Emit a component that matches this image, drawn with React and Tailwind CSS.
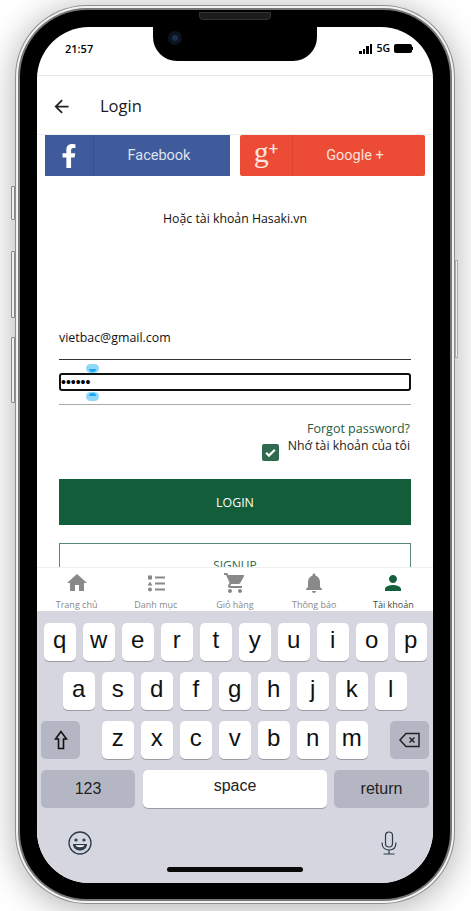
import { FaFacebookF } from 'react-icons/fa'

const font = { fontFamily: '"Open Sans", sans-serif' }

const row1 = ['q', 'w', 'e', 'r', 't', 'y', 'u', 'i', 'o', 'p']
const row2 = ['a', 's', 'd', 'f', 'g', 'h', 'j', 'k', 'l']
const row3 = ['z', 'x', 'c', 'v', 'b', 'n', 'm']

const tabs = [
  { label: 'Trang chủ', path: 'M10 20v-6h4v6h5v-8h3L12 3 2 12h3v8z' },
  { label: 'Danh mục', path: 'M4 4.5h4v4H4zM11 5.5h10v2H11zM6 10.5l2.4 4H3.6zM11 11.5h10v2H11zM6 16.5a2 2 0 1 1 0 4 2 2 0 0 1 0-4zM11 17.5h10v2H11z' },
  { label: 'Giỏ hàng', path: 'M7 18c-1.1 0-1.99.9-1.99 2S5.9 22 7 22s2-.9 2-2-.9-2-2-2zM1 2v2h2l3.6 7.59-1.35 2.45c-.16.28-.25.61-.25.96 0 1.1.9 2 2 2h12v-2H7.42c-.14 0-.25-.11-.25-.25l.03-.12.9-1.63h7.45c.75 0 1.41-.41 1.75-1.03l3.58-6.49A1 1 0 0 0 20 4H5.21l-.94-2H1zm16 16c-1.1 0-1.99.9-1.99 2s.89 2 1.99 2 2-.9 2-2-.9-2-2-2z' },
  { label: 'Thông báo', path: 'M12 22c1.1 0 2-.9 2-2h-4c0 1.1.9 2 2 2zm6-6v-5c0-3.07-1.63-5.64-4.5-6.32V4c0-.83-.67-1.5-1.5-1.5s-1.5.67-1.5 1.5v.68C7.64 5.36 6 7.92 6 11v5l-2 2v1h16v-1l-2-2z' },
  { label: 'Tài khoản', path: 'M12 12c2.21 0 4-1.79 4-4s-1.79-4-4-4-4 1.79-4 4 1.79 4 4 4zm0 2c-2.67 0-8 1.34-8 4v2h16v-2c0-2.66-5.33-4-8-4z', active: true },
]

function Key({ k }) {
  return (
    <div className="w-[31.5px] h-[38px] bg-white rounded-[5px] shadow-[0_1px_0_#9a9ba3] flex items-center justify-center text-[24px] leading-none text-[#111] pb-1">
      {k}
    </div>
  )
}

function Tab({ tab }) {
  return (
    <div className="flex-1 flex flex-col items-center">
      <svg viewBox="0 0 24 24" className="w-[24px] h-[24px]" fill={tab.active ? '#14603c' : '#8a8888'}>
        <path d={tab.path} />
      </svg>
      <span className={`text-[9px] leading-[13px] mt-[3px] ${tab.active ? 'text-[#3c4a44]' : 'text-[#888]'}`}>{tab.label}</span>
    </div>
  )
}

export default function App() {
  return (
    <div className="w-[471px] h-[911px] bg-white overflow-hidden pt-[5px] pl-[15px]" style={font}>
      <div className="relative w-[440px] h-[899px] rounded-[72px] bg-[#8f8f8f] p-[1px] shadow-[0_4px_34px_rgba(0,0,0,0.32)]">
        {/* side buttons */}
        <div className="absolute left-[-4px] top-[181px] w-[4px] h-[34px] border border-[#888] rounded-l-[1px] bg-[#eee]" />
        <div className="absolute left-[-4px] top-[246px] w-[4px] h-[67px] border border-[#888] rounded-l-[1px] bg-[#eee]" />
        <div className="absolute left-[-4px] top-[332px] w-[4px] h-[66px] border border-[#888] rounded-l-[1px] bg-[#eee]" />
        <div className="absolute right-[-3px] top-[255px] w-[3px] h-[98px] border border-[#aaa] bg-[#eee]" />

        <div className="w-full h-full rounded-[71px] bg-[#f2f2f2] p-[2px]">
          <div className="w-full h-full rounded-[69px] bg-[#777] p-[2px]">
            <div className="relative w-full h-full rounded-[67px] bg-black pt-[17px] pl-[17px]">
              {/* speaker */}
              <div className="absolute left-[179px] top-[2px] w-[72px] h-[8px] rounded-b-[4px] bg-[#1c1c1c] border border-[#333]" />

              <div className="relative w-[396px] h-[856px] rounded-[52px] overflow-hidden bg-white flex flex-col">
                {/* notch */}
                <div className="absolute left-[116px] top-0 w-[164px] h-[34px] bg-black rounded-b-[24px] z-20">
                  <div className="absolute left-[15px] top-[4px] w-[14px] h-[14px] rounded-full bg-[#0c1220]">
                    <div className="absolute left-[4px] top-[4px] w-[6px] h-[6px] rounded-full bg-[#1f2f4e]" />
                  </div>
                </div>

                {/* status bar */}
                <div className="h-[49px] shrink-0 border-b border-[#e8e8e8] flex justify-between pl-[28px] pr-[20px] pt-[14px]">
                  <span className="text-[11px] leading-[15px] font-semibold text-black">21:57</span>
                  <div className="flex items-center h-[15px] gap-[4px]">
                    <div className="flex items-end gap-[1px] h-[10px]">
                      <div className="w-[2.5px] h-[3px] bg-black" />
                      <div className="w-[2.5px] h-[5px] bg-black" />
                      <div className="w-[2.5px] h-[8px] bg-black" />
                      <div className="w-[2.5px] h-[10px] bg-black" />
                    </div>
                    <span className="text-[10.5px] font-semibold leading-none text-black">5G</span>
                    <div className="flex items-center">
                      <div className="w-[18px] h-[9px] rounded-[2px] bg-black" />
                      <div className="w-[1px] h-[3px] bg-black" />
                    </div>
                  </div>
                </div>

                {/* header */}
                <div className="h-[59px] shrink-0 border-b border-[#eee] flex items-center pl-[14px] pt-[2px]">
                  <svg viewBox="0 0 24 24" className="w-[21px] h-[21px]" fill="#222">
                    <path d="M20 11H7.83l5.59-5.59L12 4l-8 8 8 8 1.41-1.41L7.83 13H20v-2z" />
                  </svg>
                  <span className="ml-[28px] text-[16.5px] font-medium text-[#1a1a1a]">Login</span>
                </div>

                <div className="flex-1 overflow-hidden relative">
                  {/* social */}
                  <div className="flex gap-[10px] pl-[8px]">
                    <div className="w-[185px] h-[41px] bg-[#3f5b9b] flex text-[#dde3f0]">
                      <div className="w-[49px] border-r border-[#37508c] flex items-center justify-center">
                        <FaFacebookF className="text-[24px] text-white" />
                      </div>
                      <span className="flex-1 text-center leading-[41px] text-[14.5px] pr-[6px]" style={{ fontFamily: 'Roboto, sans-serif' }}>Facebook</span>
                    </div>
                    <div className="w-[185px] h-[41px] rounded-[2px] bg-[#ec4c35] flex text-[#fbe0db]">
                      <div className="w-[53px] border-r border-[#d94530] flex items-start justify-center leading-none">
                        <span className="text-[30px] leading-[34px] text-[#fde6e2]" style={{ fontFamily: '"Liberation Serif", serif' }}>g</span>
                        <span className="text-[17px] leading-[26px] text-[#fde6e2]" style={{ fontFamily: 'Roboto, sans-serif' }}>+</span>
                      </div>
                      <span className="flex-1 text-center leading-[41px] text-[14.5px] pr-[8px]" style={{ fontFamily: 'Roboto, sans-serif' }}>Google +</span>
                    </div>
                  </div>

                  <p className="text-center text-[12.3px] leading-[17px] text-[#111] mt-[34px]">Hoặc tài khoản Hasaki.vn</p>

                  {/* form */}
                  <div className="px-[22px] mt-[102px] relative">
                    <div className="h-[31px] border-b border-[#333] text-[12.4px] leading-[17px] text-[#111]">vietbac@gmail.com</div>
                    <div className="h-[45px] border-b border-[#aaa] pt-[13px] relative">
                      <div className="h-[18px] rounded-[3px] border-2 border-[#111] flex items-center text-[14px] text-black leading-none" style={{ fontFamily: '"Liberation Sans", sans-serif' }}>••••••</div>
                      <div className="absolute left-[27px] top-[4px] w-[13px] h-[9px] rounded-full bg-[#8fd8fb]">
                        <div className="absolute left-[3px] top-[5px] w-[7px] h-[3px] rounded-b-full bg-[#1ba9f0]" />
                      </div>
                      <div className="absolute left-[27px] top-[32px] w-[13px] h-[9px] rounded-full bg-[#8fd8fb]">
                        <div className="absolute left-[3px] top-[1px] w-[7px] h-[3px] rounded-t-full bg-[#1ba9f0]" />
                      </div>
                    </div>

                    <p className="text-right text-[12.5px] leading-[17px] font-medium text-[#245c43] mt-[15px] pr-[1px]">Forgot password?</p>
                    <div className="flex justify-end pr-[1px]">
                      <div className="w-[17px] h-[17px] rounded-[2px] bg-[#2f6a50] mt-[7px] mr-[9px] flex items-center justify-center">
                        <svg viewBox="0 0 24 24" className="w-[15px] h-[15px]" fill="none" stroke="white" strokeWidth="3.4">
                          <path d="M5 12.5l4.5 4.5L19 7.5" />
                        </svg>
                      </div>
                      <span className="text-[12.3px] leading-[17px] text-[#222]">Nhớ tài khoản của tôi</span>
                    </div>

                    <div className="h-[46px] mt-[18px] pt-[2px] bg-[#125e3b] text-white text-[12.4px] font-medium flex items-center justify-center">LOGIN</div>
                    <div className="h-[46px] mt-[18px] border border-[#5a8a76] text-[#2f6a50] text-[12px] flex items-center justify-center">SIGNUP</div>
                  </div>
                </div>

                {/* bottom tabs */}
                <div className="absolute left-0 right-0 top-[540px] h-[44px] bg-white border-t border-[#eee] flex pt-[3px] z-10">
                  {tabs.map(t => <Tab key={t.label} tab={t} />)}
                </div>

                {/* keyboard */}
                <div className="absolute left-0 right-0 top-[584px] bottom-0 bg-[#d5d6e0] z-10 text-[#111]" style={{ fontFamily: '"Liberation Sans", sans-serif' }}>
                  <div className="flex gap-[7.5px] pl-[7px] pt-[12px]">
                    {row1.map(k => <Key key={k} k={k} />)}
                  </div>
                  <div className="flex gap-[7.5px] pl-[26px] pt-[11px]">
                    {row2.map(k => <Key key={k} k={k} />)}
                  </div>
                  <div className="flex pl-[4px] pt-[11px]">
                    <div className="w-[39px] h-[38px] rounded-[5px] bg-[#b5b6c3] flex items-center justify-center">
                      <svg viewBox="0 0 14 20" className="w-[14px] h-[20px]" fill="none" stroke="#111" strokeWidth="1.6">
                        <path d="M7 1.5L1.5 9H4.5v9.5h5V9h3z" />
                      </svg>
                    </div>
                    <div className="flex gap-[7.5px] ml-[22px]">
                      {row3.map(k => <Key key={k} k={k} />)}
                    </div>
                    <div className="w-[39px] h-[38px] ml-[22.5px] rounded-[5px] bg-[#b5b6c3] flex items-center justify-center">
                      <svg viewBox="0 0 24 24" className="w-[24px] h-[24px]" fill="none" stroke="#222" strokeWidth="1.5">
                        <path d="M8 5.5h13v13H8L2 12zM11.5 9.5l5 5M16.5 9.5l-5 5" />
                      </svg>
                    </div>
                  </div>
                  <div className="flex pl-[4px] pt-[11px] text-[16px]">
                    <div className="w-[94px] h-[38px] rounded-[5px] bg-[#b5b6c3] flex items-center justify-center text-[#222]">123</div>
                    <div className="w-[184px] h-[38px] ml-[8px] rounded-[5px] bg-white shadow-[0_1px_0_#9a9ba3] flex items-center justify-center pb-[6px] text-[#222]">space</div>
                    <div className="w-[95px] h-[38px] ml-[7px] rounded-[5px] bg-[#b5b6c3] flex items-center justify-center text-[#222]">return</div>
                  </div>
                  <div className="flex justify-between pl-[31px] pr-[32px] pt-[23px]">
                    <svg viewBox="0 0 24 24" className="w-[24px] h-[24px]" fill="none" stroke="#2c3a4a" strokeWidth="1.3">
                      <circle cx="12" cy="12" r="11" />
                      <circle cx="8" cy="9" r="1.6" fill="#2c3a4a" stroke="none" />
                      <circle cx="16" cy="9" r="1.6" fill="#2c3a4a" stroke="none" />
                      <path d="M5 13h14c0 4-3 6.5-7 6.5S5 17 5 13z" fill="#2c3a4a" stroke="none" />
                      <path d="M7.5 14.2h9c-.3 1.2-2 2-4.5 2s-4.2-.8-4.5-2z" fill="#fff" stroke="none" />
                    </svg>
                    <svg viewBox="0 0 24 24" className="w-[24px] h-[24px]" fill="none" stroke="#2c3a4a" strokeWidth="1.2">
                      <rect x="8.5" y="1" width="7" height="15" rx="3.5" />
                      <path d="M5 11.5c0 5 3 7.5 7 7.5s7-2.5 7-7.5M12 19v4M6.5 23h11" />
                    </svg>
                  </div>
                  <div className="w-[136px] h-[5px] rounded-full bg-[#0a0a0a] ml-[130px] mt-[12px]" />
                </div>
              </div>
            </div>
          </div>
        </div>
      </div>
    </div>
  )
}
